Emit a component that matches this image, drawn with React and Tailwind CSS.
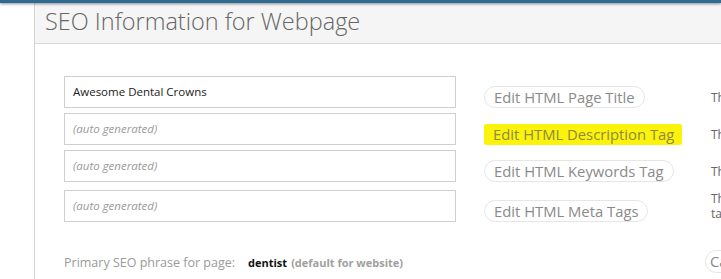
export default function App() {
  const rows = [
    { value: "Awesome Dental Crowns", label: "Edit HTML Page Title", right: ["Th"], mt: "mt-0", pb: "pb-[3px]" },
    { value: "", label: "Edit HTML Description Tag", right: ["Th"], hl: true, mt: "mt-[5px]", pb: "pb-[3px]" },
    { value: "", label: "Edit HTML Keywords Tag", right: ["Th"], mt: "mt-[5px]", pb: "pb-[3px]" },
    { value: "", label: "Edit HTML Meta Tags", right: ["Th", "ta"], mt: "mt-[8px]", pb: "pb-[1px]" },
  ];
  return (
    <div className="w-[721px] h-[279px] overflow-hidden bg-white" style={{ fontFamily: '"Open Sans", "Liberation Sans", sans-serif' }}>
      <div className="relative z-10 h-[3px] bg-[#2f6a92] shadow-[0_1px_3px_rgba(0,0,0,0.45)]" />
      <div className="flex h-[276px]">
        <div className="w-[34px] shrink-0" />
        <div className="flex-1 min-w-0 border-l border-[#d4d4d4]">
          <div className="h-[41px] bg-[#f5f5f5] border-b border-[#dadada] pl-[10px] flex items-center">
            <h1 className="text-[23.5px] font-light text-[#666] leading-none -mt-[3px] whitespace-nowrap">SEO Information for Webpage</h1>
          </div>
          <div className="pl-[29px] pt-[32px] w-[800px]">
            {rows.map((r, i) => (
              <div key={i} className={`flex items-end ${r.mt}`}>
                <div className="w-[392px] h-[32px] border border-[#cfcfcf] flex items-center pl-[8px] shrink-0">
                  {r.value ? (
                    <span className="text-[11.5px] text-[#222]">{r.value}</span>
                  ) : (
                    <span className="text-[11.5px] italic text-[#9a9a9a]">(auto generated)</span>
                  )}
                </div>
                <div className="w-[249px] pl-[28px] shrink-0 flex">
                  {r.hl ? (
                    <span className="h-[21px] flex items-center pl-[9px] pr-[8px] bg-[#fbf30c] rounded-[2px] text-[14.8px] leading-none text-[#8d8a3c] whitespace-nowrap">
                      {r.label}
                    </span>
                  ) : (
                    <span className="h-[22px] flex items-center px-[9px] border border-[#e6e6e6] rounded-full text-[14.8px] leading-none text-[#8a8a8a] whitespace-nowrap">
                      {r.label}
                    </span>
                  )}
                </div>
                <div className={`pl-[6px] text-[12px] leading-[15px] text-[#666] ${r.pb}`}>
                  {r.right.map((t, j) => (
                    <div key={j}>{t}</div>
                  ))}
                </div>
              </div>
            ))}
            <div className="flex items-center mt-[28px]">
              <div className="w-[641px] shrink-0 flex items-baseline whitespace-nowrap pt-[3px]">
                <span className="text-[12.5px] text-[#9a9a9a]">Primary SEO phrase for page:</span>
                <span className="ml-[13px] text-[11px] font-bold text-[#111]">dentist</span>
                <span className="ml-[4px] text-[11px] font-bold text-[#a0a0a0]">(default for website)</span>
              </div>
              <span className="h-[23px] flex items-center px-[4px] border border-[#e6e6e6] rounded-full text-[14.8px] leading-none text-[#888]">Cancel</span>
            </div>
          </div>
        </div>
      </div>
    </div>
  );
}
